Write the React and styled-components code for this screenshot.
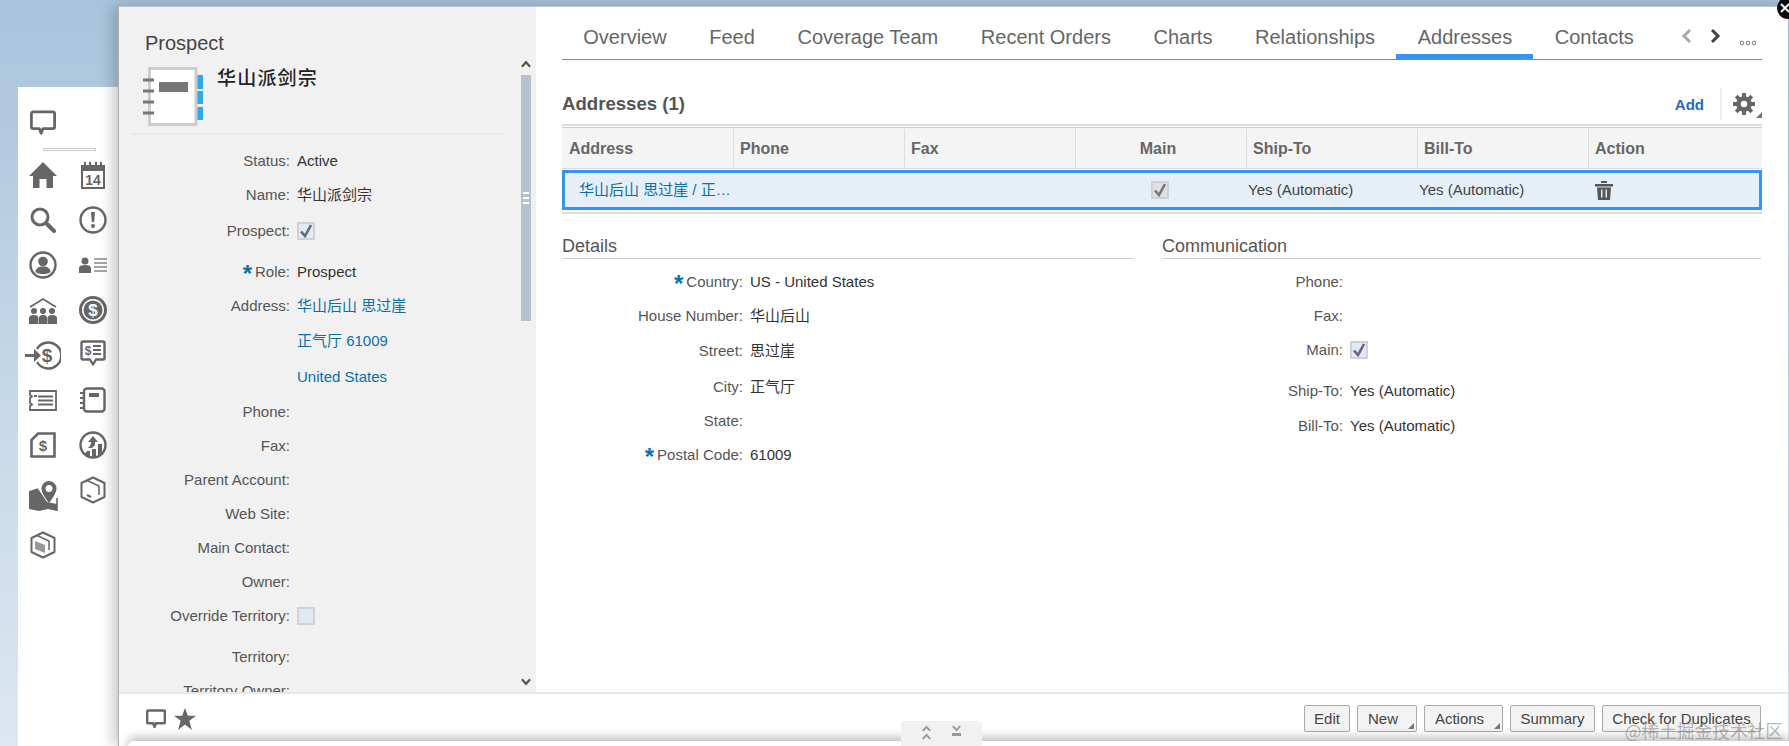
import React from "react";
import styled, { createGlobalStyle } from "styled-components";

const Global = createGlobalStyle`
  html, body { margin: 0; padding: 0; background: #fff; }
  #root { width: 1789px; height: 746px; overflow: hidden; }
  * { box-sizing: border-box; }
`;

const FONT = `"Liberation Sans", Arial, "Noto Sans CJK SC", sans-serif`;

const Page = styled.div`
  position: relative;
  display: flex;
  align-items: flex-start;
  width: 1789px;
  height: 746px;
  overflow: hidden;
  font-family: ${FONT};
  font-size: 15px;
  color: #444;
  background: linear-gradient(180deg, #a8c3db 0%, #c4d7e8 50%, #dde7f1 100%);
`;

const Rail = styled.nav`
  flex: none;
  width: 101px;
  height: 659px;
  margin: 87px 0 0 18px;
  background: #fff;
  color: #666;
`;
const RailTop = styled.div`
  display: flex;
  justify-content: center;
  width: 50px;
  padding-top: 23px;
  height: 61px;
`;
const RailSep = styled.div`
  width: 53px;
  height: 3px;
  margin-left: 25px;
  border: 1px solid #ccc;
  background: #fff;
`;
const RailGrid = styled.div`
  display: grid;
  grid-template-columns: 50px 50px;
  grid-auto-rows: 45px;
  margin-top: 1.5px;
`;
const RailCell = styled.div`
  display: flex;
  align-items: center;
  justify-content: center;
  padding-top: ${(p) => p.$drop || 0}px;
  padding-bottom: ${(p) => p.$lift || 0}px;
  height: ${(p) => (p.$drop ? 45 + p.$drop : 45)}px;
`;

const Dialog = styled.section`
  flex: none;
  display: flex;
  flex-direction: column;
  width: 1669px;
  height: 740px;
  margin-top: 6px;
  background: #fff;
  border-top: 1px solid #b9c5d0;
  box-shadow: -1px 0 1px #b0b0b0, -6px 0 14px rgba(0, 0, 0, 0.22);
`;
const Body = styled.div`
  display: flex;
  height: 685px;
`;
const LeftPane = styled.aside`
  position: relative;
  flex: none;
  width: 417px;
  height: 685px;
  overflow: hidden;
  background: #f1f1f1;
`;
const PaneTitle = styled.h2`
  margin: 24px 0 0 26px;
  font-size: 20px;
  line-height: 24px;
  font-weight: 400;
  color: #444;
`;
const RecordHead = styled.div`
  display: flex;
  gap: 14px;
  margin: 12px 0 0 24px;
  height: 59px;
`;
const RecordName = styled.div`
  margin-top: -2px;
  font-family: "Noto Sans CJK SC", sans-serif;
  font-size: 19px;
  font-weight: 500;
  letter-spacing: 1.2px;
  line-height: 24px;
  color: #222;
`;
const Divider = styled.div`
  width: 372px;
  height: 2px;
  margin: 7px 0 9px 12px;
  background: #e9e9e9;
`;
const Row = styled.div`
  display: grid;
  grid-template-columns: ${(p) => p.$label}px 1fr;
  column-gap: ${(p) => p.$gap || 8}px;
  align-items: center;
  height: 34px;
  line-height: 18px;
  margin-top: ${(p) => p.$top || 0}px;
`;
const Label = styled.div`
  text-align: right;
  color: #555;
  white-space: nowrap;
`;
const Star = styled.span`
  font-size: 24px;
  line-height: 0;
  font-weight: 700;
  color: #0b6fa8;
  margin-right: 3px;
  vertical-align: -5px;
`;
const Value = styled.div`
  color: #333;
  white-space: nowrap;
`;
const LinkValue = styled(Value)`
  color: #0b6fa8;
`;
const Check = styled.span`
  display: flex;
  align-items: center;
  justify-content: center;
  width: 18px;
  height: 18px;
  border: 2px solid #cfd1d3;
  background: ${(p) => (p.$grey ? "#dde1e6" : "#dfeaf5")};
`;

const ScrollTrack = styled.div`
  position: absolute;
  top: 0;
  right: 5px;
  bottom: 0;
  width: 10px;
`;
const ScrollUp = styled.div`
  position: absolute;
  top: 53px;
  left: 0;
  display: flex;
  width: 10px;
`;
const ScrollDown = styled.div`
  position: absolute;
  top: 671px;
  left: 0;
  display: flex;
  width: 10px;
`;
const ScrollThumb = styled.div`
  position: absolute;
  top: 68px;
  left: 0;
  width: 10px;
  height: 246px;
  display: flex;
  align-items: center;
  justify-content: center;
  background: #b5c2cf;
`;
const Grip = styled.div`
  width: 6px;
  height: 12px;
  background: repeating-linear-gradient(180deg, #fff 0 2px, transparent 2px 5px);
`;

const RightPane = styled.main`
  flex: 1;
  min-width: 0;
  padding: 0 26px;
`;
const TabBar = styled.div`
  display: flex;
  align-items: flex-end;
  height: 53px;
  border-bottom: 1px solid #3d9bee;
`;
const TabList = styled.div`
  display: flex;
`;
const Tab = styled.div`
  height: 52px;
  padding: 17px 21.3px 0;
  font-size: 20px;
  line-height: 26px;
  color: #666;
  white-space: nowrap;
  border-bottom: 5px solid ${(p) => (p.$active ? "#3496f0" : "transparent")};
`;
const TabTools = styled.div`
  display: flex;
  align-items: center;
  gap: 18px;
  margin-left: 26px;
  height: 52px;
  padding-top: 6px;
  color: #666;
`;
const Dots = styled.span`
  display: flex;
  margin-top: 14px;
`;
const SectionHead = styled.div`
  display: flex;
  align-items: center;
  height: 64px;
  padding-top: 26px;
  padding-bottom: 2px;
`;
const SectionTitle = styled.h3`
  flex: 1;
  margin: 0;
  font-size: 18.6px;
  font-weight: 700;
  color: #555;
`;
const AddLink = styled.span`
  font-size: 15px;
  font-weight: 700;
  color: #1a6dc2;
`;
const ToolSep = styled.span`
  width: 2px;
  height: 32px;
  margin: 0 11px 0 16px;
  background: #eee;
`;
const GearBox = styled.span`
  position: relative;
  display: flex;
  color: #666;
  width: 29px;
`;
const Caret = styled.span`
  position: absolute;
  right: ${(p) => p.$right}px;
  bottom: ${(p) => p.$bottom}px;
  width: 0;
  height: 0;
  border-style: solid;
  border-width: 0 0 6px 6px;
  border-color: transparent transparent #777 transparent;
`;

const Table = styled.div`
  border-top: 2px solid #ddd;
  padding-top: 1px;
`;
const HeaderRow = styled.div`
  display: grid;
  grid-template-columns: repeat(6, 171px) 1fr;
  height: 42px;
  padding-top: 1px;
  border-top: 1px solid #ccc;
  border-bottom: 1px solid #ddd;
  background: #f4f4f4;
`;
const HeadCell = styled.div`
  display: flex;
  align-items: center;
  justify-content: ${(p) => (p.$center ? "center" : "flex-start")};
  padding-left: ${(p) => (p.$center ? 0 : p.$first ? 7 : 6)}px;
  padding-right: ${(p) => (p.$center ? 6 : 0)}px;
  font-size: 16px;
  font-weight: 700;
  color: #666;
  border-left: ${(p) => (p.$first ? "none" : "1px solid #ddd")};
`;
const DataRow = styled.div`
  display: grid;
  grid-template-columns: 170px repeat(5, 171px) 1fr;
  height: 40px;
  margin-top: 1px;
  background: #e6eef8;
  border: 3px solid #3496f0;
`;
const DataCell = styled.div`
  display: flex;
  align-items: center;
  justify-content: ${(p) => (p.$center ? "center" : "flex-start")};
  padding-left: ${(p) => p.$pad || 0}px;
  padding-right: ${(p) => (p.$center ? 5 : 0)}px;
  padding-bottom: ${(p) => (p.$link ? 3 : p.$raise ? 2 : 0)}px;
  color: ${(p) => (p.$link ? "#0b6fa8" : "#444")};
  white-space: nowrap;
`;
const TableEnd = styled.div`
  height: 2px;
  margin-top: 2px;
  background: #ddd;
`;

const Columns = styled.div`
  display: grid;
  grid-template-columns: 572px 599px;
  column-gap: 28px;
  margin-top: 19px;
`;
const GroupTitle = styled.h4`
  margin: 0 0 6px;
  height: 26px;
  padding-top: 1px;
  font-size: 18px;
  line-height: 24px;
  font-weight: 400;
  color: #555;
  border-bottom: 1px solid #ccc;
`;

const Footer = styled.footer`
  display: flex;
  align-items: flex-start;
  justify-content: space-between;
  height: 54px;
  padding: 11px 27px 0 27px;
  border-top: 2px solid #e8e8e8;
  color: #666;
`;
const FooterIcons = styled.div`
  display: flex;
  gap: 8px;
  align-items: center;
  margin-top: 3px;
`;
const Buttons = styled.div`
  display: flex;
  gap: 7px;
`;
const Btn = styled.div`
  position: relative;
  display: flex;
  align-items: center;
  justify-content: center;
  width: ${(p) => p.$w}px;
  height: 27px;
  border: 1px solid #aaa;
  border-radius: 2px;
  background: #f3f3f3;
  color: #444;
  white-space: nowrap;
  padding-right: ${(p) => (p.$menu ? 8 : 0)}px;
`;

const NextPanel = styled.div`
  position: absolute;
  left: 128px;
  top: 741px;
  width: 1661px;
  height: 20px;
  background: #fff;
  border-top-left-radius: 6px;
  box-shadow: 0 -4px 10px rgba(0, 0, 0, 0.25);
`;
const Collapse = styled.div`
  position: absolute;
  left: 901px;
  top: 721px;
  width: 81px;
  height: 25px;
  display: flex;
  align-items: flex-start;
  justify-content: center;
  gap: 21px;
  padding-top: 4px;
  border-radius: 3px 3px 0 0;
  background: #f1f1f1;
`;
const ChevronStack = styled.span`
  display: flex;
  flex-direction: column;
  gap: 1px;
`;
const CloseBtn = styled.div`
  position: absolute;
  left: 1777px;
  top: -3px;
  width: 22px;
  height: 22px;
  border-radius: 50%;
  background: #0a0a0a;
  color: #fff;
  display: flex;
  padding: 6px 0 0 3px;
`;
const Watermark = styled.div`
  position: absolute;
  right: 6px;
  top: 718px;
  font-family: "Noto Sans CJK SC", sans-serif;
  font-size: 17.7px;
  line-height: 24px;
  color: rgba(120, 120, 120, 0.55);
  white-space: nowrap;
`;

const G = { fill: "#666" };
const O = { fill: "none", stroke: "#666", strokeWidth: 2.4 };

const Comment = ({ size = 26, sw = 3 }) => (
  <svg width={size} height={size} viewBox="0 0 28 28">
    <path {...O} strokeWidth={sw} strokeLinejoin="round" d="M3.5 2h21a2 2 0 0 1 2 2v14a2 2 0 0 1-2 2H14l-2 5-2-5H3.500a2 2 0 0 1-2-2V4a2 2 0 0 1 2-2z" />
  </svg>
);
const Home = () => (
  <svg width="28" height="26" viewBox="0 0 28 26"><path {...G} d="M14 0 28 14h-4v12h-6.500v-9h-7v9H4V14H0z" /></svg>
);
const Calendar = () => (
  <svg width="24" height="27" viewBox="0 0 24 27">
    <path {...G} d="M0 3h3V0h2v3h3V0h2v3h4V0h2v3h3V0h2v3h3v24H0z" />
    <rect x="2" y="9" width="20" height="16" fill="#fff" />
    <text x="12" y="22.500" textAnchor="middle" fontFamily="Liberation Sans" fontWeight="700" fontSize="14" fill="#666">14</text>
  </svg>
);
const Search = () => (
  <svg width="26" height="26" viewBox="0 0 26 26">
    <circle cx="10" cy="10" r="8" {...O} strokeWidth="3" />
    <path stroke="#666" strokeWidth="4" strokeLinecap="round" d="M17 17l7 7" />
  </svg>
);
const Alert = () => (
  <svg width="28" height="28" viewBox="0 0 28 28">
    <circle cx="14" cy="14" r="12.500" {...O} />
    <path {...G} d="M12 6h4l-.8 10h-2.400z" /><circle cx="14" cy="20" r="2" {...G} />
  </svg>
);
const Person = () => (
  <svg width="28" height="28" viewBox="0 0 28 28">
    <circle cx="14" cy="14" r="12.500" {...O} />
    <circle cx="14" cy="10.500" r="4.800" {...G} />
    <path {...G} d="M6.500 21c0-3.500 3-5.500 7.500-5.500s7.500 2 7.500 5.500c-1.500 1.500-4.500 2-7.500 2s-6-.5-7.500-2z" />
  </svg>
);
const PersonList = () => (
  <svg width="28" height="16" viewBox="0 0 28 16">
    <circle cx="6" cy="4" r="3.500" {...G} />
    <path {...G} d="M0 16v-5c0-2 2-3 6-3s6 1 6 3v5z" />
    <path stroke="#888" strokeWidth="1.500" d="M15 2h13M15 6h13M15 10h13M15 14h13" />
  </svg>
);
const HousePeople = () => (
  <svg width="28" height="27" viewBox="0 0 28 27">
    <path {...O} strokeWidth="1.800" d="M1 10 14 2l13 8" />
    <circle cx="5" cy="14" r="3" {...G} /><circle cx="14" cy="14" r="3" {...G} /><circle cx="23" cy="14" r="3" {...G} />
    <path {...G} d="M0 27v-6c0-2 2-3 5-3s4 1 4.500 3v6zM10 27v-6c0-2 1-3 4-3s4 1 4 3v6zM18.500 27v-6c.5-2 1.500-3 4.500-3s5 1 5 3v6z" />
  </svg>
);
const Coin = () => (
  <svg width="28" height="28" viewBox="0 0 28 28">
    <circle cx="14" cy="14" r="14" {...G} /><circle cx="14" cy="14" r="11" fill="#fff" /><circle cx="14" cy="14" r="9.500" {...G} />
    <text x="14" y="20" textAnchor="middle" fontFamily="Liberation Sans" fontWeight="700" fontSize="17" fill="#fff">$</text>
  </svg>
);
const ArrowCoin = () => (
  <svg width="36" height="29" viewBox="0 0 36 29">
    <path {...O} d="M12 8A13 13 0 1 1 12 21" />
    <path {...G} d="M0 13h9V8l7 6.500-7 6.500v-5H0z" />
    <text x="22" y="21" textAnchor="middle" fontFamily="Liberation Sans" fontWeight="700" fontSize="19" fill="#666">$</text>
  </svg>
);
const SpeechDollar = () => (
  <svg width="26" height="27" viewBox="0 0 26 27">
    <path {...O} strokeLinejoin="round" d="M3 1.500h20a1.500 1.500 0 0 1 1.500 1.500v15a1.500 1.500 0 0 1-1.500 1.500h-7l-3 5-3-5H3A1.500 1.500 0 0 1 1.500 18V3A1.500 1.500 0 0 1 3 1.500z" />
    <text x="8" y="15" textAnchor="middle" fontFamily="Liberation Sans" fontWeight="700" fontSize="12" fill="#666">$</text>
    <path stroke="#666" strokeWidth="1.800" d="M13 6h8M13 10h8M13 14h8" />
  </svg>
);
const Ticket = () => (
  <svg width="28" height="21" viewBox="0 0 28 21">
    <path {...O} strokeWidth="1.800" d="M1 1h26v19H1v-4l2-1.500L1 13V8l2-1.500L1 5z" />
    <path stroke="#666" strokeWidth="2" d="M9 6.500h15M9 10.500h15M9 14.500h15" />
    <rect x="5" y="5" width="3" height="2" {...G} />
  </svg>
);
const NoteOutline = () => (
  <svg width="26" height="26" viewBox="0 0 26 26">
    <rect x="4" y="1.500" width="20.500" height="23" rx="3" {...O} />
    <rect x="9" y="6" width="10" height="4" {...G} />
    <path stroke="#666" strokeWidth="2" d="M0 6h5M0 11h5M0 16h5M0 21h5" />
  </svg>
);
const DocDollar = () => (
  <svg width="26" height="26" viewBox="0 0 26 26">
    <path {...O} strokeWidth="2.600" d="M8 1.500h16.500v23H1.500V8z" />
    <text x="13" y="19" textAnchor="middle" fontFamily="Liberation Sans" fontWeight="700" fontSize="15" fill="#666">$</text>
  </svg>
);
const Growth = () => (
  <svg width="28" height="28" viewBox="0 0 28 28">
    <circle cx="14" cy="14" r="12.500" {...O} />
    <path {...G} d="M14 5l5 6h-3v3l-3 3H9c1-1 3-3 3-5v-1H9z" />
    <path {...G} d="M5 24l3-4h3v6zM13 26v-8h4v9zM19 25V13h4v10z" />
  </svg>
);
const MapPin = () => (
  <svg width="30" height="30" viewBox="0 0 30 30">
    <path {...G} d="M1 11l9-3 3 4 6 9 10 2v7l-9-2-9 2-10-2z" />
    <path d="M1 11l9-3M29 17v13" {...O} strokeWidth="1.600" />
    <path {...G} d="M21 0a7.500 7.500 0 0 0-7.500 7.500C13.500 12 18 18 21 22c3-4 7.500-10 7.500-14.500A7.500 7.500 0 0 0 21 0z" />
    <circle cx="21" cy="7.500" r="3.500" fill="#fff" />
  </svg>
);
const Hex = ({ filled }) => (
  <svg width="26" height="28" viewBox="0 0 26 28">
    <path {...O} strokeWidth="2" strokeLinejoin="round" d="M13 1.500 24.500 7v14L13 26.500 1.500 21V7z" />
    <path stroke="#666" strokeWidth="1.500" fill="none" d="M7 4.500l12 5.500v9" />
    {filled ? <path fill="#999" d="M5 10l10 4v8l-10-4z" /> : <path stroke="#666" strokeWidth="2" d="M7 19l4 2" />}
  </svg>
);
const Notebook = () => (
  <svg width="60" height="59" viewBox="0 0 60 59">
    <path fill="#2fa8ee" d="M54 8h6v14h-6zM54 24h6v13h-6zM54 40h6v13h-6z" />
    <rect x="6.500" y="1.500" width="46.500" height="56" fill="#fff" stroke="#ccc" strokeWidth="3" />
    <path stroke="#777" strokeWidth="3" d="M0 13h11M0 24h11M0 35h11M0 46h11" />
    <rect x="16" y="15" width="29" height="10" fill="#777" />
  </svg>
);
const Tick = ({ color = "#667" }) => (
  <svg width="14" height="14" viewBox="0 0 14 14">
    <path fill="none" stroke={color} strokeWidth="2.600" d="M2 7.500 6 12 12 1" />
  </svg>
);
const Chevron = ({ dir = "up", color = "currentColor", w = 11, h = 8, sw = 2.4 }) => (
  <svg width={w} height={h} viewBox="0 0 11 8">
    <path fill="none" stroke={color} strokeWidth={sw} d={dir === "up" ? "M1 7l4.500-5L10 7" : "M1 1l4.500 5L10 1"} />
  </svg>
);
const SideChevron = ({ dir, color }) => (
  <svg width="11" height="14" viewBox="0 0 11 14">
    <path fill="none" stroke={color} strokeWidth="3" d={dir === "left" ? "M9 1 3 7l6 6" : "M2 1l6 6-6 6"} />
  </svg>
);
const Gear = () => (
  <svg width="22" height="22" viewBox="0 0 22 22">
    <circle cx="11" cy="11" r="5.500" fill="none" stroke="#666" strokeWidth="4.500" />
    <path stroke="#666" strokeWidth="4" d="M11 0v5M11 17v5M0 11h5M17 11h5M3.200 3.200l3.500 3.500M15.300 15.300l3.500 3.500M3.200 18.800l3.500-3.500M15.300 6.700l3.500-3.500" />
  </svg>
);
const Trash = () => (
  <svg width="18" height="19" viewBox="0 0 18 19">
    <path fill="#555" d="M0 3h18v2.500H0zM6 0h6v2H6zM2 6.500h14l-1 12.500H3zM6 8.500v8h1.500v-8zM10.500 8.500v8H12v-8z" fillRule="evenodd" />
  </svg>
);
const StarIcon = () => (
  <svg width="22" height="22" viewBox="0 0 20 20">
    <path fill="#666" d="M10 0l2.600 7H20l-6 4.600L16.200 20 10 15l-6.200 5L6 11.600 0 7h7.400z" />
  </svg>
);

const railIcons = [
  [<Home />, 0, 0], [<Calendar />, 0, 0],
  [<Search />, 0, 0], [<Alert />, 0, 0],
  [<Person />, 0, 0], [<PersonList />, 0, 0],
  [<HousePeople />, 0, 0], [<Coin />, 0, 0],
  [<ArrowCoin />, 0, 0], [<SpeechDollar />, 0, 4],
  [<Ticket />, 0, 0], [<NoteOutline />, 0, 0],
  [<DocDollar />, 0, 0], [<Growth />, 0, 0],
  [<MapPin />, 6, 0], [<Hex />, 0, 0],
  [<Hex filled />, 10, 0],
];

const fields = [
  { label: "Status:", value: "Active" },
  { label: "Name:", value: "华山派剑宗" },
  { label: "Prospect:", check: true, top: 2 },
  { label: "Role:", value: "Prospect", star: true, top: 7 },
  { label: "Address:", link: "华山后山 思过崖" },
  { label: "", link: "正气厅 61009", top: 1 },
  { label: "", link: "United States", top: 2 },
  { label: "Phone:", top: 1 },
  { label: "Fax:" },
  { label: "Parent Account:" },
  { label: "Web Site:" },
  { label: "Main Contact:" },
  { label: "Owner:" },
  { label: "Override Territory:", empty: true },
  { label: "Territory:", top: 7 },
  { label: "Territory Owner:" },
];

const tabs = ["Overview", "Feed", "Coverage Team", "Recent Orders", "Charts", "Relationships", "Addresses", "Contacts"];
const heads = ["Address", "Phone", "Fax", "Main", "Ship-To", "Bill-To", "Action"];

const details = [
  { label: "Country:", value: "US - United States", star: true },
  { label: "House Number:", value: "华山后山" },
  { label: "Street:", value: "思过崖", top: 1 },
  { label: "City:", value: "正气厅", top: 2 },
  { label: "State:" },
  { label: "Postal Code:", value: "61009", star: true },
];
const comms = [
  { label: "Phone:" },
  { label: "Fax:" },
  { label: "Main:", check: true },
  { label: "Ship-To:", value: "Yes (Automatic)", top: 7 },
  { label: "Bill-To:", value: "Yes (Automatic)", top: 1 },
];

function FieldRow({ f, label, gap }) {
  return (
    <Row $label={label} $gap={gap} $top={f.top}>
      <Label>
        {f.star && <Star>*</Star>}
        {f.label}
      </Label>
      {f.link ? (
        <LinkValue>{f.link}</LinkValue>
      ) : f.check ? (
        <Check><Tick /></Check>
      ) : f.empty ? (
        <Check />
      ) : (
        <Value>{f.value}</Value>
      )}
    </Row>
  );
}

export default function App() {
  return (
    <Page>
      <Global />
      <Rail>
        <RailTop><Comment /></RailTop>
        <RailSep />
        <RailGrid>
          {railIcons.map(([icon, drop, lift], i) => (
            <RailCell key={i} $drop={drop} $lift={lift}>{icon}</RailCell>
          ))}
        </RailGrid>
      </Rail>
      <Dialog>
        <Body>
          <LeftPane>
            <PaneTitle>Prospect</PaneTitle>
            <RecordHead>
              <Notebook />
              <RecordName>华山派剑宗</RecordName>
            </RecordHead>
            <Divider />
            {fields.map((f, i) => (
              <FieldRow key={i} f={f} label={171} gap={7} />
            ))}
            <ScrollTrack>
              <ScrollUp><Chevron dir="up" color="#555" /></ScrollUp>
              <ScrollThumb><Grip /></ScrollThumb>
              <ScrollDown><Chevron dir="down" color="#555" /></ScrollDown>
            </ScrollTrack>
          </LeftPane>
          <RightPane>
            <TabBar>
              <TabList>
                {tabs.map((t) => (
                  <Tab key={t} $active={t === "Addresses"}>{t}</Tab>
                ))}
              </TabList>
              <TabTools>
                <SideChevron dir="left" color="#aaa" />
                <SideChevron dir="right" color="#444" />
                <Dots>
                  <svg width="18" height="6" viewBox="0 0 18 6">
                    <circle cx="3" cy="3" r="1.800" fill="none" stroke="#777" />
                    <circle cx="9" cy="3" r="1.800" fill="none" stroke="#777" />
                    <circle cx="15" cy="3" r="1.800" fill="none" stroke="#777" />
                  </svg>
                </Dots>
              </TabTools>
            </TabBar>
            <SectionHead>
              <SectionTitle>Addresses (1)</SectionTitle>
              <AddLink>Add</AddLink>
              <ToolSep />
              <GearBox>
                <Gear />
                <Caret $right={0} $bottom={-3} />
              </GearBox>
            </SectionHead>
            <Table>
              <HeaderRow>
                {heads.map((h, i) => (
                  <HeadCell key={h} $first={i === 0} $center={h === "Main"}>{h}</HeadCell>
                ))}
              </HeaderRow>
              <DataRow>
                <DataCell $link $pad={14}>华山后山 思过崖 / 正…</DataCell>
                <DataCell />
                <DataCell />
                <DataCell $center><Check $grey><Tick color="#777" /></Check></DataCell>
                <DataCell $raise>Yes (Automatic)</DataCell>
                <DataCell $raise>Yes (Automatic)</DataCell>
                <DataCell $pad={5}><Trash /></DataCell>
              </DataRow>
              <TableEnd />
            </Table>
            <Columns>
              <div>
                <GroupTitle>Details</GroupTitle>
                {details.map((f, i) => (
                  <FieldRow key={i} f={f} label={181} gap={7} />
                ))}
              </div>
              <div>
                <GroupTitle>Communication</GroupTitle>
                {comms.map((f, i) => (
                  <FieldRow key={i} f={f} label={181} gap={7} />
                ))}
              </div>
            </Columns>
          </RightPane>
        </Body>
        <Footer>
          <FooterIcons>
            <Comment size={20} sw={3.6} />
            <StarIcon />
          </FooterIcons>
          <Buttons>
            <Btn $w={46}>Edit</Btn>
            <Btn $w={60} $menu>New<Caret $right={2} $bottom={2} /></Btn>
            <Btn $w={79} $menu>Actions<Caret $right={2} $bottom={2} /></Btn>
            <Btn $w={85}>Summary</Btn>
            <Btn $w={159}>Check for Duplicates</Btn>
          </Buttons>
        </Footer>
      </Dialog>
      <NextPanel />
      <Collapse>
        <ChevronStack>
          <Chevron dir="up" color="#999" w={9} h={7} />
          <Chevron dir="up" color="#999" w={9} h={7} />
        </ChevronStack>
        <ChevronStack>
          <Chevron dir="down" color="#999" w={9} h={7} />
          <svg width="9" height="3" viewBox="0 0 9 3"><rect width="9" height="3" fill="#999" /></svg>
        </ChevronStack>
      </Collapse>
      <CloseBtn>
        <svg width="10" height="10" viewBox="0 0 10 10">
          <path stroke="#fff" strokeWidth="2" d="M1 1l8 8M9 1 1 9" />
        </svg>
      </CloseBtn>
      <Watermark>@稀土掘金技术社区</Watermark>
    </Page>
  );
}
